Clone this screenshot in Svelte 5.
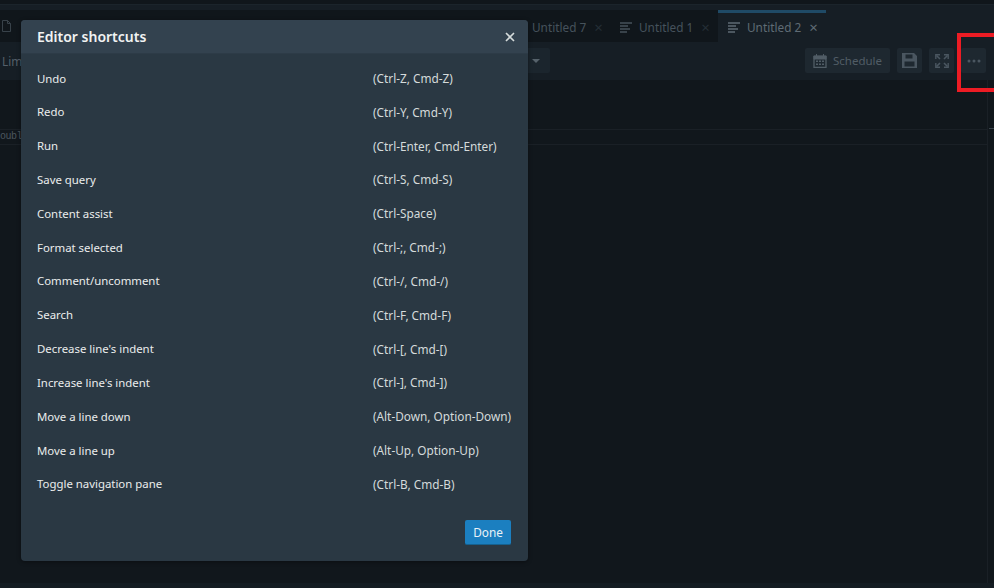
<script lang="ts">
  const shortcuts = [
    ["Undo", "(Ctrl-Z, Cmd-Z)"],
    ["Redo", "(Ctrl-Y, Cmd-Y)"],
    ["Run", "(Ctrl-Enter, Cmd-Enter)"],
    ["Save query", "(Ctrl-S, Cmd-S)"],
    ["Content assist", "(Ctrl-Space)"],
    ["Format selected", "(Ctrl-;, Cmd-;)"],
    ["Comment/uncomment", "(Ctrl-/, Cmd-/)"],
    ["Search", "(Ctrl-F, Cmd-F)"],
    ["Decrease line's indent", "(Ctrl-[, Cmd-[)"],
    ["Increase line's indent", "(Ctrl-], Cmd-])"],
    ["Move a line down", "(Alt-Down, Option-Down)"],
    ["Move a line up", "(Alt-Up, Option-Up)"],
    ["Toggle navigation pane", "(Ctrl-B, Cmd-B)"],
  ];
</script>

{#snippet lines()}
  <svg class="tab-icon" viewBox="0 0 12 11" width="12" height="11" aria-hidden="true">
    <path d="M0 1h12M0 4h8M0 7h10M0 10h7" stroke="currentColor" stroke-width="1.5" fill="none" />
  </svg>
{/snippet}

<div class="page">
  <div class="topbar"></div>

  <div class="tabs">
    <div class="lead">
      <svg viewBox="0 0 9 12" width="9" height="12" aria-hidden="true">
        <path d="M.5.5h5l3 3v8h-8zM5.5.5v3h3" fill="none" stroke="currentColor" />
      </svg>
    </div>
    <div class="tab first">Untitled 7 <span class="x">×</span></div>
    <div class="tab">{@render lines()} Untitled 1 <span class="x">×</span></div>
    <div class="tab active">{@render lines()} Untitled 2 <span class="x">×</span></div>
  </div>

  <div class="toolbar">
    <span class="limit">Lim</span>
    <div class="select"><span class="caret"></span></div>
    <span class="spacer"></span>
    <button class="tool schedule">
      <svg viewBox="0 0 14 14" width="14" height="14" aria-hidden="true">
        <path d="M1 2.5h12v11H1z" fill="none" stroke="currentColor" stroke-width="1.3" />
        <path d="M1 2h12v3H1zM3.5 0v2M10.5 0v2" fill="currentColor" stroke="currentColor" />
        <path d="M3 6.5h2V8H3zM6 6.5h2V8H6zM9 6.5h2V8H9zM3 9.5h2V11H3zM6 9.5h2V11H6zM9 9.5h2V11H9z" fill="currentColor" />
      </svg>
      Schedule
    </button>
    <button class="tool square" aria-label="Save">
      <svg viewBox="0 0 15 15" width="15" height="15" aria-hidden="true">
        <path fill-rule="evenodd" fill="currentColor" d="M0 0h12l3 3v12H0zM3.5 1.5v4h7v-4zM2.5 8.5v5h10v-5z" />
      </svg>
    </button>
    <button class="tool square" aria-label="Fullscreen">
      <svg viewBox="0 0 14 14" width="14" height="14" aria-hidden="true">
        <path d="M.8 5V.8H5M9 .8h4.2V5M13.2 9v4.2H9M5 13.2H.8V9" fill="none" stroke="currentColor" stroke-width="1.4" />
        <path d="M1.5 1.5l3.5 3.5M12.5 1.5L9 5M12.5 12.5L9 9M1.5 12.5L5 9" fill="none" stroke="currentColor" stroke-width="1.6" />
      </svg>
    </button>
    <button class="tool square" aria-label="More">
      <svg viewBox="0 0 14 4" width="14" height="4" aria-hidden="true">
        <circle cx="2" cy="2" r="1.5" fill="currentColor" />
        <circle cx="7" cy="2" r="1.5" fill="currentColor" />
        <circle cx="12" cy="2" r="1.5" fill="currentColor" />
      </svg>
    </button>
  </div>

  <div class="editor">
    <div class="code">
      <div class="code-row">oubl</div>
    </div>
    <div class="scrollbar"><span class="tick"></span></div>
  </div>
  <div class="statusbar"></div>

  <div class="highlight"></div>

  <div class="modal" role="dialog" aria-label="Editor shortcuts">
    <header>
      <h2>Editor shortcuts</h2>
      <button class="close" aria-label="Close">
        <svg viewBox="0 0 10 10" width="10" height="10" aria-hidden="true">
          <path d="M1 1l8 8M9 1l-8 8" stroke="currentColor" stroke-width="1.6" fill="none" />
        </svg>
      </button>
    </header>
    <div class="list">
      {#each shortcuts as [name, keys]}
        <div class="row">
          <span class="name">{name}</span>
          <span class="keys">{keys}</span>
        </div>
      {/each}
    </div>
    <footer>
      <button class="done">Done</button>
    </footer>
  </div>
</div>

<style>
  :global(body) {
    margin: 0;
    background: #11171c;
  }
  .page {
    position: relative;
    width: 994px;
    height: 588px;
    overflow: hidden;
    background: #11171c;
    font-family: "Noto Sans", sans-serif;
    font-size: 11.8px;
    display: flex;
    flex-direction: column;
  }
  .topbar {
    height: 5px;
    flex: none;
    background: #10161b;
    border-bottom: 1px solid #1b242b;
    box-sizing: border-box;
  }
  .tabs {
    display: flex;
    height: 37px;
    flex: none;
    box-sizing: border-box;
    padding-top: 5px;
    background: #161e25;
    color: #46525b;
  }
  .spacer {
    flex: 1;
  }
  .lead {
    flex: 1;
    display: flex;
    align-items: center;
    padding-left: 2px;
    background: #10161b;
    color: #38424a;
  }
  .tab {
    display: flex;
    align-items: center;
    gap: 8px;
    width: 108px;
    flex: none;
    box-sizing: border-box;
    padding: 2px 0 0 10px;
    background: #10161b;
    white-space: nowrap;
  }
  .tab.first {
    padding-left: 30px;
  }
  .tab.active {
    padding: 0 0 1px 10px;
    background: #161e25;
    border-top: 3px solid #1f4a66;
    color: #5f6b74;
    margin-right: 168px;
  }
  .tab-icon {
    flex: none;
    margin-right: -1px;
  }
  .x {
    font-size: 15px;
    line-height: 1;
    color: #242e36;
  }
  .active .x {
    color: #5f6b74;
  }
  .toolbar {
    display: flex;
    align-items: center;
    gap: 7px;
    height: 38px;
    flex: none;
    box-sizing: border-box;
    padding: 0 8px 1px 2px;
    background: #161e25;
    color: #56626b;
  }
  .limit {
    width: 441px;
    color: #55606a;
  }
  .select {
    display: flex;
    align-items: center;
    justify-content: flex-end;
    width: 100px;
    height: 25px;
    box-sizing: border-box;
    padding-right: 10px;
    background: #1b252d;
    border-radius: 2px;
  }
  .caret {
    border: 4px solid transparent;
    border-top: 4px solid #56626b;
    border-bottom: 0;
  }
  .tool {
    display: flex;
    align-items: center;
    justify-content: center;
    gap: 7px;
    height: 25px;
    border: 0;
    border-radius: 2px;
    padding: 0;
    background: #1e2830;
    color: #4a5660;
    font: inherit;
  }
  .schedule {
    width: 85px;
    gap: 6px;
    font-size: 11.5px;
    color: #515d66;
  }
  .square {
    width: 25px;
  }
  .editor {
    flex: 1;
    display: flex;
    background: #11171c;
  }
  .code {
    flex: 1;
    padding-top: 49px;
  }
  .code-row {
    height: 14px;
    border-top: 1px solid #1a2026;
    border-bottom: 1px solid #1a2026;
    font-family: "Liberation Mono", monospace;
    font-size: 10px;
    letter-spacing: -0.5px;
    line-height: 14px;
    color: #4c565e;
  }
  .scrollbar {
    width: 7px;
    box-sizing: border-box;
    border-left: 1px solid #1a2026;
    padding-top: 48px;
  }
  .tick {
    display: block;
    height: 1px;
    margin-left: 1px;
    background: #39434b;
  }
  .statusbar {
    height: 5px;
    flex: none;
    background: #141c22;
  }
  .highlight {
    position: absolute;
    left: 957px;
    top: 33px;
    width: 44px;
    height: 59px;
    box-sizing: border-box;
    border: 4px solid #ed1c24;
  }
  .modal {
    position: absolute;
    left: 21px;
    top: 20px;
    width: 507px;
    height: 541px;
    display: flex;
    flex-direction: column;
    background: #2a3843;
    border-radius: 4px;
    color: #eaeded;
    box-shadow: 0 1px 4px rgba(0, 0, 0, 0.4);
  }
  header {
    display: flex;
    align-items: center;
    justify-content: space-between;
    height: 33px;
    flex: none;
    padding: 0 13px 0 16px;
    background: #33424f;
    border-bottom: 1px solid #2d3b47;
    border-radius: 4px 4px 0 0;
  }
  h2 {
    margin: 0;
    font-size: 14px;
    font-weight: 600;
    color: #f2f3f3;
  }
  .close {
    display: flex;
    border: 0;
    padding: 0;
    background: none;
    color: #d5dbdb;
  }
  .list {
    flex: 1;
    padding: 7.1px 16px 0;
  }
  .row {
    display: grid;
    grid-template-columns: 336px 1fr;
    height: 33.83px;
    align-items: center;
    white-space: nowrap;
  }
  .name {
    font-size: 11.4px;
    font-weight: 440;
  }
  .keys {
    color: #d5dbdb;
  }
  footer {
    display: flex;
    justify-content: flex-end;
    padding: 0 17px 16px;
  }
  .done {
    width: 46px;
    height: 25px;
    border: 0;
    border-bottom: 1px solid #15618f;
    border-radius: 2px;
    padding: 0;
    background: #1b7fc0;
    color: #eaf3f8;
    font: inherit;
  }
</style>
